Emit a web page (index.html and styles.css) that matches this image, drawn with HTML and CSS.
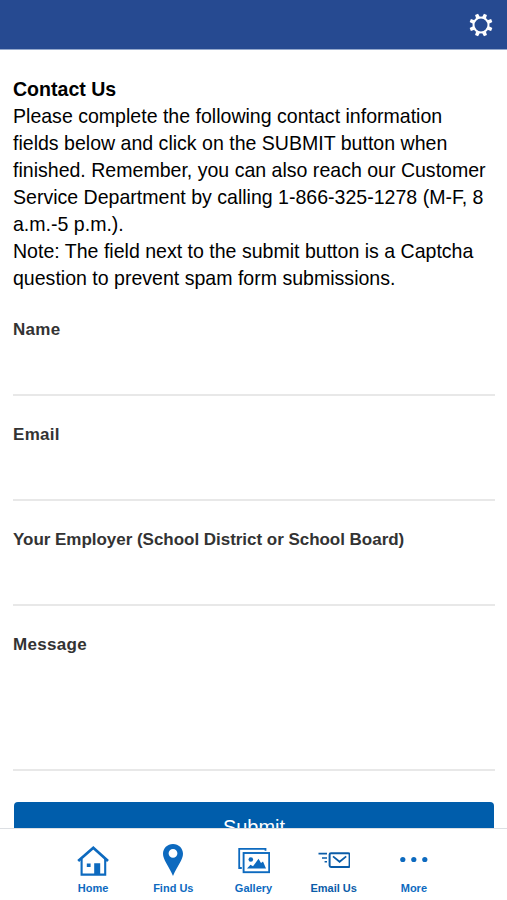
FILE: index.html
```html
<!DOCTYPE html>
<html lang="en">
<head>
    <meta charset="UTF-8">
    <meta name="viewport" content="width=device-width, initial-scale=1.0">
    <title>Contact Us</title>
    <link rel="stylesheet" href="styles.css">
</head>
<body>
    <header class="top-bar">
        <button class="settings-btn" type="button" aria-label="Settings">
            <svg width="24" height="24" viewBox="-12 -12 24 24">
                <circle r="7.5" fill="none" stroke="#fff" stroke-width="2"/>
                <g fill="#fff">
                    <path id="tooth" d="M-2 -7.8L-1.6 -11.6H1.6L2 -7.8Z" transform="rotate(22.5)"/>
                    <use href="#tooth" transform="rotate(45)"/>
                    <use href="#tooth" transform="rotate(90)"/>
                    <use href="#tooth" transform="rotate(135)"/>
                    <use href="#tooth" transform="rotate(180)"/>
                    <use href="#tooth" transform="rotate(225)"/>
                    <use href="#tooth" transform="rotate(270)"/>
                    <use href="#tooth" transform="rotate(315)"/>
                </g>
            </svg>
        </button>
    </header>

    <main class="content">
        <div class="intro">
            <strong>Contact Us</strong><br>
            Please complete the following contact information<br>
            fields below and click on the SUBMIT button when<br>
            finished. Remember, you can also reach our Customer<br>
            Service Department by calling 1-866-325-1278 (M-F, 8<br>
            a.m.-5 p.m.).<br>
            Note: The field next to the submit button is a Captcha<br>
            question to prevent spam form submissions.
        </div>

        <form class="contact-form">
            <div class="field">
                <label for="name">Name</label>
                <input type="text" id="name">
            </div>
            <div class="field">
                <label for="email">Email</label>
                <input type="email" id="email">
            </div>
            <div class="field">
                <label for="employer" class="label-long">Your Employer (School District or School Board)</label>
                <input type="text" id="employer">
            </div>
            <div class="field">
                <label for="message">Message</label>
                <textarea id="message"></textarea>
            </div>
            <button class="submit-btn" type="submit">Submit</button>
        </form>
    </main>

    <nav class="tab-bar">
        <a class="tab" href="#">
            <svg width="32" height="32" viewBox="0 0 32 32">
                <path d="M1.2 17L16.3 3.8L31 17" fill="none" stroke="currentColor" stroke-width="2.8"/>
                <path d="M4.6 15V30.6H28.2V15" fill="none" stroke="currentColor" stroke-width="2.1"/>
                <path d="M17.2 19.2H23.2V30.5H17.2ZM9.8 19.4H13.6V23H9.8Z" fill="currentColor"/>
            </svg>
            <span>Home</span>
        </a>
        <a class="tab" href="#">
            <svg width="32" height="32" viewBox="0 0 32 32">
                <path fill="currentColor" fill-rule="evenodd" d="M16 0C10.3 0 6 4.3 6 9.8C6 15.8 11.6 21.8 16 32C20.4 21.8 26 15.8 26 9.8C26 4.3 21.7 0 16 0ZM16 4.9A4.4 4.4 0 1 1 16 13.7A4.4 4.4 0 1 1 16 4.9Z"/>
            </svg>
            <span>Find Us</span>
        </a>
        <a class="tab" href="#">
            <svg width="32" height="32" viewBox="0 0 32 32">
                <path d="M27.5 6.8V4.8H1.2V24H3.8" fill="none" stroke="currentColor" stroke-width="1.8"/>
                <rect x="5.6" y="9" width="25.6" height="19.2" fill="none" stroke="currentColor" stroke-width="1.9"/>
                <circle cx="12.8" cy="15.5" r="2.3" fill="currentColor"/>
                <path fill="currentColor" d="M9 24.5L12.5 20.8L15 22.3L20.5 14.8L23 19L25 17.4L28 24.5Z"/>
            </svg>
            <span>Gallery</span>
        </a>
        <a class="tab active" href="#">
            <svg width="32" height="32" viewBox="0 0 32 32">
                <path d="M0.5 9.6H9M4 14H9M6.6 17.8H9" fill="none" stroke="currentColor" stroke-width="1.6"/>
                <rect x="11.6" y="9.2" width="20" height="13.8" rx="1.4" fill="none" stroke="currentColor" stroke-width="2"/>
                <path d="M15 12.4L21.6 17.8L28.2 12.4" fill="none" stroke="currentColor" stroke-width="1.8"/>
            </svg>
            <span>Email Us</span>
        </a>
        <a class="tab" href="#">
            <svg width="32" height="32" viewBox="0 0 32 32" fill="currentColor">
                <circle cx="4.8" cy="15.5" r="2.6"/>
                <circle cx="15.8" cy="15.5" r="2.6"/>
                <circle cx="26.8" cy="15.5" r="2.6"/>
            </svg>
            <span>More</span>
        </a>
    </nav>
</body>
</html>
```

FILE: styles.css
```css
* {
    box-sizing: border-box;
}

body {
    display: flex;
    flex-direction: column;
    height: 100vh;
    margin: 0;
    overflow: hidden;
    background-color: #fff;
    font-family: "Liberation Sans", Arial, Helvetica, sans-serif;
}

.top-bar {
    display: flex;
    flex: none;
    align-items: center;
    justify-content: flex-end;
    height: 50px;
    padding: 1px 14px 0 0;
    background-color: #264a91;
    border-bottom: 1px solid #94a8cc;
}

.settings-btn {
    display: flex;
    padding: 0;
    border: none;
    background: none;
    cursor: pointer;
}

.content {
    flex: 1;
    min-height: 0;
    overflow: hidden;
    padding: 26px 12px 0 13px;
}

.intro {
    color: #000;
    font-size: 19.56px;
    line-height: 27px;
    white-space: nowrap;
}

.contact-form {
    display: flex;
    flex-direction: column;
    padding-top: 27px;
}

.field {
    display: flex;
    flex-direction: column;
    margin-bottom: 28px;
}

label {
    color: #333;
    font-size: 17px;
    font-weight: bold;
    line-height: 21px;
    letter-spacing: 0.3px;
}

.label-long {
    letter-spacing: -0.03px;
}

input,
textarea {
    width: 100%;
    height: 56px;
    padding: 8px 0;
    border: none;
    border-bottom: 2px solid #e8e8e8;
    background: none;
    font-family: inherit;
    font-size: 18px;
    outline: none;
}

textarea {
    height: 116px;
    resize: none;
}

.submit-btn {
    height: 50px;
    margin: 3px 1px 0;
    border: none;
    border-radius: 4px;
    background-color: #005dab;
    color: #fff;
    font-family: inherit;
    font-size: 20px;
    cursor: pointer;
}

.tab-bar {
    display: flex;
    flex: none;
    justify-content: center;
    height: 72px;
    padding-top: 15px;
    border-top: 1px solid #dcdfe3;
    background-color: #fff;
}

.tab {
    display: flex;
    flex-direction: column;
    align-items: center;
    width: 80.2px;
    color: #0d6abf;
    font-size: 11px;
    font-weight: bold;
    line-height: 13px;
    text-decoration: none;
    gap: 6px;
}

.tab.active {
    color: #0a5ca8;
}
```
